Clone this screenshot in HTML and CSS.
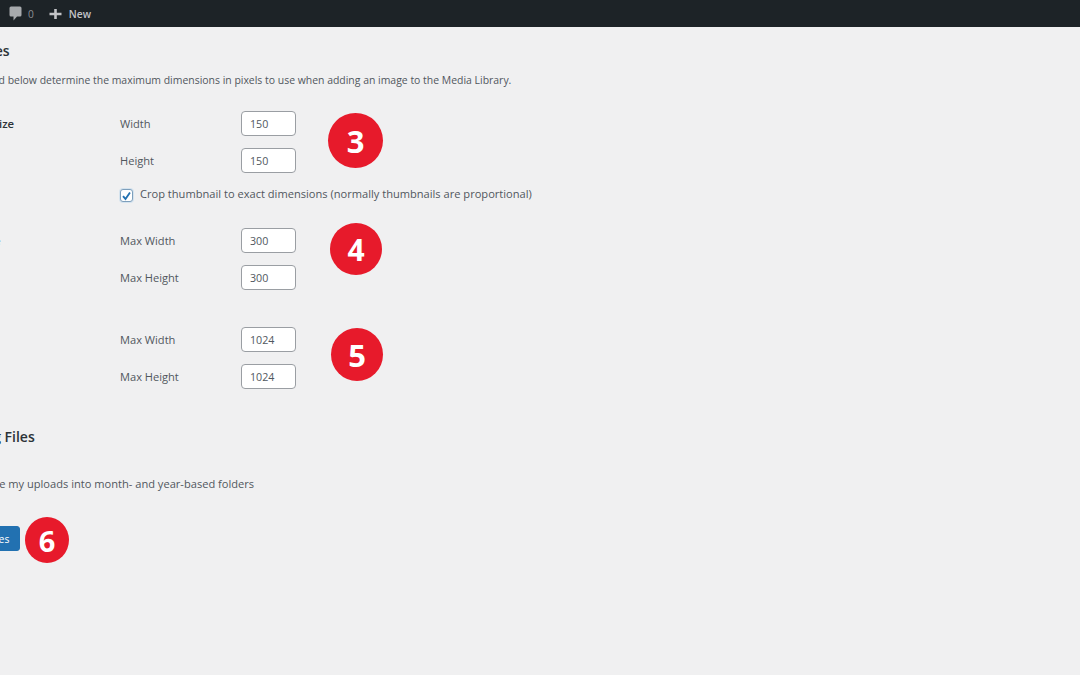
FILE: index.html
```html
<!DOCTYPE html>
<html lang="en">

<head>
    <meta charset="UTF-8">
    <title>Media Settings</title>
    <link rel="stylesheet" href="styles.css">
</head>

<body>
    <div class="admin-bar">
        <svg class="comment-icon" width="13" height="15" viewBox="0 0 13 15">
            <path d="M2 0.5h9a1.5 1.5 0 0 1 1.5 1.5v7a1.5 1.5 0 0 1-1.5 1.5H8L4.5 14.5V10.5H2A1.5 1.5 0 0 1 0.5 9V2A1.5 1.5 0 0 1 2 0.5z" fill="#a7aaad"/>
        </svg>
        <span class="bar-count">0</span>
        <svg class="plus-icon" width="13" height="12" viewBox="0 0 13 12">
            <path d="M5.2 1h2.6v3.7h4.7v2.6H7.8V11H5.2V7.3H0.5V4.7h4.7z" fill="#c3c4c7"/>
        </svg>
        <span class="bar-new">New</span>
    </div>

    <div class="wrap">
        <h2 class="section-title first">Image sizes</h2>
        <p class="intro">The sizes listed below determine the maximum dimensions in pixels to use when adding an image to the Media Library.</p>

        <div class="size-group thumb-group">
            <div class="row">
                <div class="row-head">Thumbnail size</div>
                <label class="field-label">Width</label>
                <input class="size-input" type="text" value="150">
            </div>
            <div class="row">
                <div class="row-head"></div>
                <label class="field-label">Height</label>
                <input class="size-input" type="text" value="150">
            </div>
            <div class="row check-row">
                <div class="row-head"></div>
                <span class="check-box checked">
                    <svg width="12" height="12" viewBox="0 0 12 12"><path d="M2.2 6.2l2.7 3 4.9-7" fill="none" stroke="#2271b1" stroke-width="2"/></svg>
                </span>
                <span>Crop thumbnail to exact dimensions (normally thumbnails are proportional)</span>
            </div>
        </div>

        <div class="size-group medium-group">
            <div class="row">
                <div class="row-head">Medium size</div>
                <label class="field-label">Max Width</label>
                <input class="size-input" type="text" value="300">
            </div>
            <div class="row">
                <div class="row-head"></div>
                <label class="field-label">Max Height</label>
                <input class="size-input" type="text" value="300">
            </div>
        </div>

        <div class="size-group large-group">
            <div class="row">
                <div class="row-head">Large size</div>
                <label class="field-label">Max Width</label>
                <input class="size-input" type="text" value="1024">
            </div>
            <div class="row">
                <div class="row-head"></div>
                <label class="field-label">Max Height</label>
                <input class="size-input" type="text" value="1024">
            </div>
        </div>

        <h2 class="section-title uploads-title">Uploading Files</h2>
        <div class="uploads-row">
            <span class="check-box"></span>
            <span>Organize my uploads into month- and year-based folders</span>
        </div>

        <button class="save-button" type="button">Save Changes</button>
    </div>

    <!-- numbered callouts on top of the screenshot -->
    <div class="callout callout-3">3</div>
    <div class="callout callout-4">4</div>
    <div class="callout callout-5">5</div>
    <div class="callout callout-6">6</div>
</body>

</html>
```

FILE: styles.css
```css
body {
    margin: 0;
    height: 675px;
    overflow: hidden;
    background-color: #f0f0f1;
    color: #50575e;
    font-family: "Open Sans", sans-serif;
    font-size: 11.1px;
    position: relative;
}

/* Top bar */
.admin-bar {
    display: flex;
    align-items: center;
    height: 27px;
    padding-left: 9px;
    background-color: #1d2327;
    color: #c3c4c7;
    font-size: 10.2px;
}

.bar-count {
    margin-left: 6px;
    color: #8c8f94;
}

.plus-icon {
    margin-left: 15px;
}

.bar-new {
    margin-left: 7px;
    font-weight: 600;
}

/* Content, cut off by the left edge of the window */
.wrap {
    margin-left: -68px;
}

.section-title {
    margin: 0;
    font-size: 14px;
    font-weight: 600;
    line-height: 20px;
    color: #2c3338;
}

.first {
    margin-top: 14px;
}

.intro {
    margin: 10px 0 0;
    font-size: 10.45px;
    line-height: 18px;
}

/* Rows of size fields */
.size-group {
    display: flex;
    flex-direction: column;
    gap: 12px;
}

.thumb-group {
    margin-top: 22px;
}

.medium-group {
    margin-top: 25px;
}

.large-group {
    margin-top: 37px;
}

.row {
    display: flex;
    align-items: center;
    height: 25px;
}

.row-head {
    width: 188px;
    flex-shrink: 0;
    font-size: 11.3px;
    font-weight: 600;
    color: #2c3338;
}

.field-label {
    width: 121px;
}

.size-input {
    box-sizing: border-box;
    width: 55px;
    height: 25px;
    padding: 0 8px;
    border: 1px solid #9a9ea3;
    border-radius: 4px;
    background-color: #fff;
    color: #50575e;
    font-family: inherit;
    font-size: 10.7px;
}

.check-row {
    height: 18px;
    line-height: 16px;
}

.check-box {
    display: flex;
    align-items: center;
    justify-content: center;
    box-sizing: border-box;
    width: 13px;
    height: 13px;
    margin-right: 7px;
    border: 1px solid #8c8f94;
    border-radius: 3px;
    background-color: #fff;
}

.checked {
    margin-top: 3px;
    border-color: #7e9fbc;
    box-shadow: 0 0 0 1px #d5e3ee;
}

/* Uploading files */
.uploads-title {
    margin-top: 38px;
}

.uploads-row {
    display: flex;
    align-items: center;
    margin-top: 27px;
    height: 18px;
}

.uploads-row .check-box {
    margin-right: 14px;
}

.save-button {
    display: block;
    width: 88px;
    height: 25px;
    margin-top: 34px;
    padding: 0;
    border: 1px solid #2271b1;
    border-radius: 3px;
    background-color: #2271b1;
    color: #fff;
    font-family: inherit;
    font-size: 10.4px;
}

/* Red numbered circles */
.callout {
    position: absolute;
    display: flex;
    align-items: center;
    justify-content: center;
    border-radius: 50%;
    background-color: #e71a2b;
    color: #fff;
    font-family: "Open Sans", sans-serif;
    font-weight: 700;
}

.callout-3 {
    left: 328px;
    top: 113px;
    width: 55px;
    height: 55px;
    font-size: 31px;
}

.callout-4 {
    left: 330px;
    top: 223px;
    width: 52px;
    height: 52px;
    font-size: 30px;
}

.callout-5 {
    left: 331px;
    top: 328px;
    width: 52px;
    height: 53px;
    font-size: 31px;
}

.callout-6 {
    left: 25px;
    top: 517px;
    width: 44px;
    height: 46px;
    font-size: 29px;
}
```
